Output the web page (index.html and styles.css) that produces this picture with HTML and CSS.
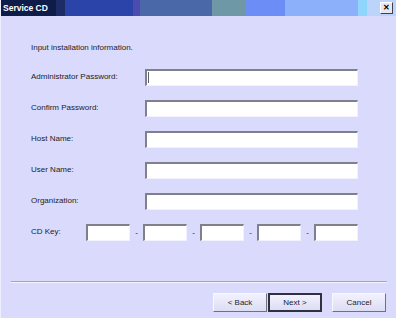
FILE: index.html
```html
<!DOCTYPE html>
<html>
<head>
<meta charset="utf-8">
<link rel="stylesheet" href="styles.css">
</head>
<body>
<div class="window">
  <div class="titlebar">
    <span class="title">Service CD</span>
    <span class="close">&#x2715;</span>
  </div>
  <div class="content">
    <p class="intro">Input installation information.</p>
    <div class="form">
      <label class="lbl">Administrator Password:</label><div class="field"><span class="caret"></span></div>
      <label class="lbl">Confirm Password:</label><div class="field"></div>
      <label class="lbl">Host Name:</label><div class="field"></div>
      <label class="lbl">User Name:</label><div class="field"></div>
      <label class="lbl">Organization:</label><div class="field"></div>
      <label class="lbl">CD Key:</label>
      <div class="keys">
        <div class="key"></div><span class="dash">-</span>
        <div class="key"></div><span class="dash">-</span>
        <div class="key"></div><span class="dash">-</span>
        <div class="key"></div><span class="dash">-</span>
        <div class="key"></div>
      </div>
    </div>
  </div>
  <div class="sep"></div>
  <div class="buttons">
    <button class="btn">&lt; Back</button>
    <button class="btn default">Next &gt;</button>
    <button class="btn cancel">Cancel</button>
  </div>
</div>
</body>
</html>
```
FILE: styles.css
```css
html, body {
  margin: 0;
  padding: 0;
  background: #dadafc;
}
.window {
  width: 396px;
  height: 318px;
  background: #dadafc;
  font-family: "Liberation Sans", Arial, sans-serif;
  font-size: 8px;
  color: #1c1c24;
  border-left: 1px solid #eeeeff;
  box-sizing: border-box;
  overflow: hidden;
}
.titlebar {
  height: 16px;
  display: flex;
  align-items: center;
  justify-content: space-between;
  padding: 0 3px 0 3px;
  margin-left: -1px;
  background: linear-gradient(to right,
    #0e1c4a 0, #0e1c4a 56px,
    #1e2c66 56px, #1e2c66 65px,
    #2a44aa 65px, #2a44aa 133px,
    #4c4cb0 133px, #4c4cb0 140px,
    #4a68a8 140px, #4a68a8 212px,
    #6e98a6 212px, #6e98a6 246px,
    #6c8cf6 246px, #6c8cf6 285px,
    #8cb0fa 285px, #8cb0fa 358px,
    #8ed6fc 358px, #8ed6fc 367px,
    #bcd4fa 367px);
}
.title {
  color: #ffffff;
  font-weight: bold;
  font-size: 8.5px;
}
.close {
  width: 13px;
  height: 12px;
  box-sizing: border-box;
  background: #e8e8f4;
  border: 1px solid;
  border-color: #ffffff #404050 #404050 #ffffff;
  font-size: 8px;
  font-weight: bold;
  line-height: 10px;
  text-align: center;
  color: #000;
}
.content {
  padding: 0 0 0 30px;
}
.intro {
  margin: 0;
  padding-top: 26px;
  height: 11px;
  line-height: 11px;
}
.form {
  margin-top: 16px;
  display: grid;
  grid-template-columns: 114px 213px;
  grid-auto-rows: 17px;
  row-gap: 14px;
  align-items: center;
}
.lbl {
  line-height: 11px;
  margin-top: -2px;
}
.field, .key {
  height: 17px;
  box-sizing: border-box;
  background: #ffffff;
  border: 2px solid;
  border-color: #80808c #f2f2ff #f2f2ff #80808c;
  border-width: 2px 1px 1px 2px;
  position: relative;
}
.caret {
  position: absolute;
  left: 1px;
  top: 1px;
  width: 1px;
  height: 11px;
  background: #606068;
}
.keys {
  display: flex;
  align-items: center;
  margin-left: -59px;
  height: 17px;
}
.key {
  width: 44px;
  flex: none;
}
.dash {
  width: 13px;
  text-align: center;
  font-size: 8px;
  line-height: 8px;
}
.sep {
  margin: 40px 9px 0 10px;
  height: 1px;
  background: #a4a4b4;
  border-bottom: 1px solid #f4f4ff;
}
.buttons {
  display: flex;
  justify-content: flex-end;
  padding: 10px 10px 0 0;
  gap: 1px;
}
.btn {
  width: 54px;
  height: 19px;
  box-sizing: border-box;
  font-family: "Liberation Sans", Arial, sans-serif;
  font-size: 8px;
  color: #1c1c24;
  background: linear-gradient(#f2f2fe, #dcdcf4);
  border: 1px solid;
  border-color: #f8f8ff #707080 #707080 #f8f8ff;
  padding: 0;
}
.btn.default {
  border: 2px solid #303040;
}
.btn.cancel {
  margin-left: 9px;
}
```
